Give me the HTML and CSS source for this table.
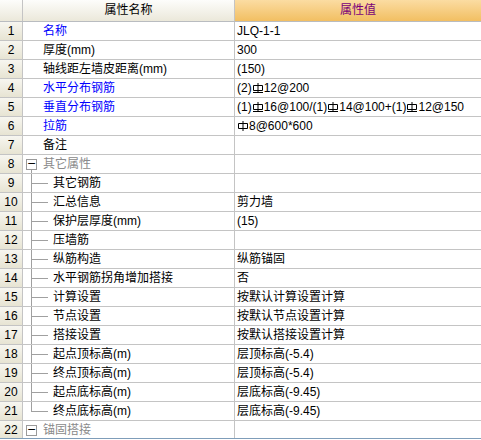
FILE: index.html
```html
<!DOCTYPE html>
<html lang="zh">
<head>
<meta charset="utf-8">
<link rel="stylesheet" href="styles.css">
</head>
<body>
<div class="grid">
  <div class="row head">
    <div class="num"></div>
    <div class="name hname">属性名称</div>
    <div class="val hval">属性值</div>
  </div>
  <div class="row"><div class="num">1</div><div class="name blue">名称</div><div class="val">JLQ-1-1</div></div>
  <div class="row"><div class="num">2</div><div class="name">厚度(mm)</div><div class="val">300</div></div>
  <div class="row"><div class="num">3</div><div class="name">轴线距左墙皮距离(mm)</div><div class="val">(150)</div></div>
  <div class="row"><div class="num">4</div><div class="name blue">水平分布钢筋</div><div class="val">(2)<svg class="sym" viewBox="0 0 12 12" aria-label="Φ"><path d="M6 1V10M1.5 3.5H10.5V8.5H1.5ZM1 10.5H11"/></svg>12@200</div></div>
  <div class="row"><div class="num">5</div><div class="name blue">垂直分布钢筋</div><div class="val">(1)<svg class="sym" viewBox="0 0 12 12" aria-label="Φ"><path d="M6 1V10M1.5 3.5H10.5V8.5H1.5ZM1 10.5H11"/></svg>16@100/(1)<svg class="sym" viewBox="0 0 12 12" aria-label="Φ"><path d="M6 1V10M1.5 3.5H10.5V8.5H1.5ZM1 10.5H11"/></svg>14@100+(1)<svg class="sym" viewBox="0 0 12 12" aria-label="Φ"><path d="M6 1V10M1.5 3.5H10.5V8.5H1.5ZM1 10.5H11"/></svg>12@150</div></div>
  <div class="row"><div class="num">6</div><div class="name blue">拉筋</div><div class="val"><svg class="sym" viewBox="0 0 12 12" aria-label="Φ"><path d="M6 1V11M1.5 3.5H10.5V8.5H1.5Z"/></svg>8@600*600</div></div>
  <div class="row"><div class="num">7</div><div class="name">备注</div><div class="val"></div></div>
  <div class="row"><div class="num">8</div><div class="name group open"><span class="box">−</span>其它属性</div><div class="val"></div></div>
  <div class="row"><div class="num">9</div><div class="name child">其它钢筋</div><div class="val"></div></div>
  <div class="row"><div class="num">10</div><div class="name child">汇总信息</div><div class="val">剪力墙</div></div>
  <div class="row"><div class="num">11</div><div class="name child">保护层厚度(mm)</div><div class="val">(15)</div></div>
  <div class="row"><div class="num">12</div><div class="name child">压墙筋</div><div class="val"></div></div>
  <div class="row"><div class="num">13</div><div class="name child">纵筋构造</div><div class="val">纵筋锚固</div></div>
  <div class="row"><div class="num">14</div><div class="name child">水平钢筋拐角增加搭接</div><div class="val">否</div></div>
  <div class="row"><div class="num">15</div><div class="name child">计算设置</div><div class="val">按默认计算设置计算</div></div>
  <div class="row"><div class="num">16</div><div class="name child">节点设置</div><div class="val">按默认节点设置计算</div></div>
  <div class="row"><div class="num">17</div><div class="name child">搭接设置</div><div class="val">按默认搭接设置计算</div></div>
  <div class="row"><div class="num">18</div><div class="name child">起点顶标高(m)</div><div class="val">层顶标高(-5.4)</div></div>
  <div class="row"><div class="num">19</div><div class="name child">终点顶标高(m)</div><div class="val">层顶标高(-5.4)</div></div>
  <div class="row"><div class="num">20</div><div class="name child">起点底标高(m)</div><div class="val">层底标高(-9.45)</div></div>
  <div class="row"><div class="num">21</div><div class="name child last">终点底标高(m)</div><div class="val">层底标高(-9.45)</div></div>
  <div class="row"><div class="num">22</div><div class="name group"><span class="box">−</span>锚固搭接</div><div class="val"></div></div>
</div>
</body>
</html>
```
FILE: styles.css
```css
* { box-sizing: border-box; }
html, body { margin: 0; padding: 0; background: #fff; }
body {
  width: 481px;
  height: 440px;
  overflow: hidden;
  font-family: "Liberation Sans", "Noto Sans CJK SC", sans-serif;
  font-size: 12px;
  color: #000;
}
.grid {
  width: 481px;
  height: 439px;
  overflow: hidden;
  border-bottom: 1px solid #7f9db9;
  display: flex;
  flex-direction: column;
}
.row {
  display: flex;
  flex: none;
  height: 19px;
  border-bottom: 1px solid #c4c4c4;
  line-height: 18px;
  white-space: nowrap;
}
.row.head {
  height: 22px;
  line-height: 21px;
}
.num {
  width: 23px;
  flex: none;
  border-right: 1px solid #c4c4c4;
  background: linear-gradient(#f7f6f0, #e7e4d3);
  text-align: center;
}
.head .num, .hname {
  background: linear-gradient(#fdfdfb, #ebe8da);
}
.name {
  width: 212px;
  flex: none;
  border-right: 1px solid #c4c4c4;
  padding-left: 20px;
  overflow: hidden;
}
.val {
  flex: 1;
  padding-left: 2px;
  overflow: hidden;
}
.hname {
  padding-left: 0;
  text-align: center;
}
.hval {
  padding-left: 0;
  text-align: center;
  color: #7a007a;
  background: linear-gradient(#fbdca2, #f2bf62);
}
.row.head { border-bottom-color: #b9bcc0; }
.blue { color: #0000ff; }
.group {
  color: #8a8a8a;
  padding-left: 3px;
  display: flex;
  align-items: center;
}
.group.open {
  background: linear-gradient(#a0a0a0, #a0a0a0) no-repeat 8px 14px / 1px 100%;
}
.box {
  width: 11px;
  height: 11px;
  border: 1px solid #9a9a9a;
  background: #fff;
  color: #000;
  font-size: 11px;
  line-height: 8px;
  text-align: center;
  margin-right: 6px;
  flex: none;
  font-family: "DejaVu Sans", sans-serif;
}
.child {
  padding-left: 30px;
  background:
    linear-gradient(#a0a0a0, #a0a0a0) no-repeat 8px 0 / 1px 100%,
    linear-gradient(#a0a0a0, #a0a0a0) no-repeat 8px 9px / 17px 1px;
}
.child.last {
  background:
    linear-gradient(#a0a0a0, #a0a0a0) no-repeat 8px 0 / 1px 10px,
    linear-gradient(#a0a0a0, #a0a0a0) no-repeat 8px 9px / 17px 1px;
}
.sym {
  width: 12px;
  height: 12px;
  vertical-align: -2px;
  fill: none;
  stroke: #000;
  stroke-width: 1;
}
```
